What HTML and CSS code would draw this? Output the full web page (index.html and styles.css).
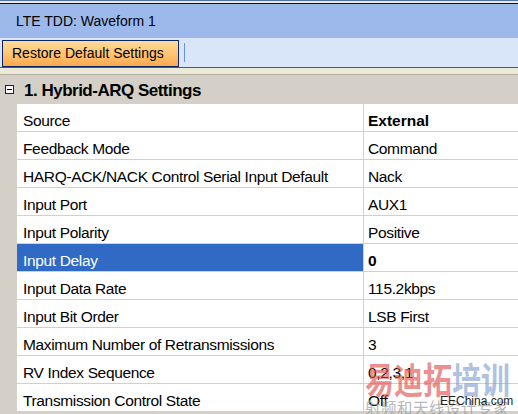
FILE: index.html
```html
<!DOCTYPE html>
<html>
<head>
<meta charset="utf-8">
<link rel="stylesheet" href="styles.css">
</head>
<body>
<div class="app">
  <div class="topline"></div>
  <div class="titlebar">LTE TDD: Waveform 1</div>
  <div class="toolbar">
    <button class="restore">Restore Default Settings</button>
    <span class="sep"></span>
  </div>
  <div class="beige"></div>
  <div class="panel">
    <div class="section">
      <span class="minus"></span>
      <span class="section-title">1. Hybrid-ARQ Settings</span>
    </div>
    <div class="grid">
      <div class="row"><div class="label">Source</div><div class="value bold">External</div></div>
      <div class="row"><div class="label">Feedback Mode</div><div class="value">Command</div></div>
      <div class="row"><div class="label">HARQ-ACK/NACK Control Serial Input Default</div><div class="value">Nack</div></div>
      <div class="row"><div class="label">Input Port</div><div class="value">AUX1</div></div>
      <div class="row"><div class="label">Input Polarity</div><div class="value">Positive</div></div>
      <div class="row selected"><div class="label">Input Delay</div><div class="value bold">0</div></div>
      <div class="row"><div class="label">Input Data Rate</div><div class="value">115.2kbps</div></div>
      <div class="row"><div class="label">Input Bit Order</div><div class="value">LSB First</div></div>
      <div class="row"><div class="label">Maximum Number of Retransmissions</div><div class="value">3</div></div>
      <div class="row"><div class="label">RV Index Sequence</div><div class="value">0,2,3,1</div></div>
      <div class="row"><div class="label">Transmission Control State</div><div class="value">Off</div></div>
    </div>
  </div>
  <div class="watermark">
    <div class="wm-big"><span class="wm-red">易迪拓</span><span class="wm-blue">培训</span></div>
    <div class="wm-small">射频和天线设计专家</div>
    <div class="wm-site">EEChina.com</div>
  </div>
</div>
</body>
</html>
```

FILE: styles.css
```css
html, body {
  margin: 0;
  padding: 0;
}
body {
  width: 518px;
  height: 414px;
  overflow: hidden;
  background: #d4d0c8;
}
.app {
  position: relative;
  width: 518px;
  height: 414px;
  overflow: hidden;
  display: flex;
  flex-direction: column;
  font-family: "Liberation Sans", Arial, sans-serif;
}
.topline {
  height: 2px;
  border-top: 1px solid #5470a8;
  border-bottom: 1px solid #0c1426;
  background: #ece9d8;
  flex: none;
}
.titlebar {
  height: 34px;
  flex: none;
  background: #9db9eb;
  color: #000;
  font-size: 14px;
  line-height: 34px;
  padding-left: 16px;
  box-sizing: border-box;
}
.toolbar {
  height: 30px;
  flex: none;
  background: #d9e5f8;
  border-bottom: 1px solid #3b5a94;
  display: flex;
  align-items: center;
  padding-left: 2px;
  box-sizing: border-box;
}
.restore {
  width: 177px;
  height: 27px;
  margin: 0;
  margin-top: 1px;
  padding: 0 0 0 9px;
  text-align: left;
  border: 1px solid #0a246a;
  background: linear-gradient(#ffdb9a, #ffc574 50%, #ffa94c);
  font-family: "Liberation Sans", Arial, sans-serif;
  font-size: 14px;
  color: #000;
}
.sep {
  width: 1px;
  height: 19px;
  margin-left: 5px;
  background: #6a94d4;
}
.beige {
  height: 7px;
  flex: none;
  background: #ece9d8;
  border-bottom: 1px solid #b3ae9f;
  box-sizing: border-box;
}
.panel {
  flex: 1;
  background: #d4d0c8;
}
.section {
  height: 28px;
  display: flex;
  align-items: center;
  box-sizing: border-box;
}
.minus {
  width: 9px;
  height: 9px;
  box-sizing: border-box;
  border: 1px solid #222;
  margin-left: 5px;
  margin-right: 10px;
  position: relative;
  background: #fff;
}
.minus::after {
  content: "";
  position: absolute;
  left: 1px;
  right: 1px;
  top: 3px;
  height: 1px;
  background: #000;
}
.section-title {
  font-family: "Liberation Sans", Arial, sans-serif;
  font-weight: bold;
  font-size: 17px;
  letter-spacing: -0.5px;
  color: #000;
  padding-top: 3px;
}
.grid {
  margin-left: 17px;
  border-top: 1px solid #d4d0c8;
}
.row {
  display: flex;
  height: 28px;
  border-bottom: 1px solid #d4d0c8;
  box-sizing: border-box;
  background: #fff;
  font-family: "Liberation Sans", Arial, sans-serif;
  font-size: 15.5px;
  letter-spacing: -0.35px;
  color: #000;
}
.label {
  width: 347px;
  flex: none;
  border-right: 1px solid #d4d0c8;
  padding-left: 6px;
  padding-top: 3px;
  box-sizing: border-box;
  line-height: 27px;
  height: 27px;
  overflow: hidden;
  white-space: nowrap;
}
.value {
  flex: 1;
  padding-left: 4px;
  padding-top: 3px;
  box-sizing: border-box;
  line-height: 27px;
  height: 27px;
  overflow: hidden;
  white-space: nowrap;
}
.bold {
  font-weight: bold;
  letter-spacing: 0;
}
.selected .label {
  background: #316ac5;
  color: #fff;
}
.watermark {
  position: absolute;
  left: 360px;
  top: 348px;
  width: 158px;
  height: 66px;
  font-family: "Noto Sans CJK SC", sans-serif;
  pointer-events: none;
}
.wm-big {
  position: absolute;
  left: 5px;
  top: 2px;
  font-size: 29px;
  font-weight: bold;
  line-height: 44px;
  letter-spacing: 0;
  opacity: 0.62;
  white-space: nowrap;
  transform: scaleY(1.25);
  transform-origin: left top;
}
.wm-red { color: #e04c4c; }
.wm-blue { color: #7f9dcc; }
.wm-small {
  position: absolute;
  left: 5px;
  top: 51px;
  font-size: 15.5px;
  line-height: 17px;
  color: #9a9a9a;
  opacity: 0.7;
  white-space: nowrap;
  letter-spacing: 0.5px;
}
.wm-site {
  position: absolute;
  left: 80px;
  top: 46px;
  font-family: "Liberation Sans", Arial, sans-serif;
  font-size: 12px;
  line-height: 14px;
  color: #222;
  white-space: nowrap;
}
```
